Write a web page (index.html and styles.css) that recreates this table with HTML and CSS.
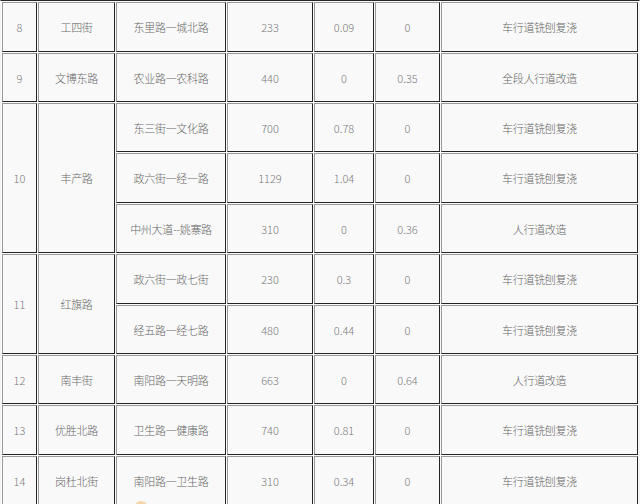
FILE: index.html
```html
<!DOCTYPE html>
<html lang="zh-CN">
<head>
<meta charset="utf-8">
<title>道路改造表</title>
<link rel="stylesheet" href="styles.css">
</head>
<body>
<div class="page">
<table class="roads">
  <colgroup>
    <col class="c1"><col class="c2"><col class="c3"><col class="c4"><col class="c5"><col class="c6"><col class="c7">
  </colgroup>
  <tbody>
    <tr class="h50"><td>8</td><td class="zh">工四街</td><td class="zh">东里路一城北路</td><td>233</td><td>0.09</td><td>0</td><td class="zh">车行道铣刨复浇</td></tr>
    <tr class="h49"><td>9</td><td class="zh">文博东路</td><td class="zh">农业路一农科路</td><td>440</td><td>0</td><td>0.35</td><td class="zh">全段人行道改造</td></tr>
    <tr class="h49"><td rowspan="3">10</td><td rowspan="3" class="zh">丰产路</td><td class="zh">东三街一文化路</td><td>700</td><td>0.78</td><td>0</td><td class="zh">车行道铣刨复浇</td></tr>
    <tr class="h50"><td class="zh">政六街一经一路</td><td>1129</td><td>1.04</td><td>0</td><td class="zh">车行道铣刨复浇</td></tr>
    <tr class="h49"><td class="zh">中州大道--姚寨路</td><td>310</td><td>0</td><td>0.36</td><td class="zh">人行道改造</td></tr>
    <tr class="h50"><td rowspan="2">11</td><td rowspan="2" class="zh">红旗路</td><td class="zh">政六街一政七街</td><td>230</td><td>0.3</td><td>0</td><td class="zh">车行道铣刨复浇</td></tr>
    <tr class="h49"><td class="zh">经五路一经七路</td><td>480</td><td>0.44</td><td>0</td><td class="zh">车行道铣刨复浇</td></tr>
    <tr class="h49"><td>12</td><td class="zh">南丰街</td><td class="zh">南阳路一天明路</td><td>663</td><td>0</td><td>0.64</td><td class="zh">人行道改造</td></tr>
    <tr class="h50"><td>13</td><td class="zh">优胜北路</td><td class="zh">卫生路一健康路</td><td>740</td><td>0.81</td><td>0</td><td class="zh">车行道铣刨复浇</td></tr>
    <tr class="h49"><td>14</td><td class="zh">岗杜北街</td><td class="zh">南阳路一卫生路</td><td>310</td><td>0.34</td><td>0</td><td class="zh">车行道铣刨复浇</td></tr>
  </tbody>
</table>
<div class="badge"></div>
</div>
</body>
</html>
```

FILE: styles.css
```css
html, body {
  margin: 0;
  padding: 0;
  background: #fafafa;
  overflow: hidden;
}

.page {
  position: relative;
  width: 640px;
  height: 504px;
  overflow: hidden;
}

.roads {
  table-layout: fixed;
  width: 640px;
  border-collapse: separate;
  border-spacing: 1px;
  border-top: 1px solid #262626;
  border-left: 1px solid #f4f4f4;
  border-right: 1px solid #f4f4f4;
  border-bottom: 0;
  background: #fafafa;
  font-family: "Noto Sans CJK SC", "Noto Sans", sans-serif;
  font-size: 11px;
  font-weight: 300;
  color: #7a7a7a;
}

.c1 { width: 35px; }
.c2 { width: 77px; }
.c3 { width: 110px; }
.c4 { width: 86px; }
.c5 { width: 60px; }
.c6 { width: 65px; }
.c7 { width: 197px; }

.roads td {
  box-sizing: border-box;
  padding: 0;
  text-align: center;
  vertical-align: middle;
  background: #f9f9f9;
  border-style: solid;
  border-width: 1px;
  border-color: #9a9a9a #242424 #242424 #9a9a9a;
  line-height: 14px;
  white-space: nowrap;
}

.roads td.zh {
  color: #666666;
  letter-spacing: -0.3px;
}

.h50 { height: 50px; }
.h49 { height: 49px; }

.badge {
  position: absolute;
  left: 134px;
  top: 501px;
  width: 14px;
  height: 14px;
  border-radius: 50%;
  background: radial-gradient(circle at 50% 30%, #f3cf9a 0%, #f6dcb8 50%, rgba(250,240,225,0.4) 100%);
}
```
